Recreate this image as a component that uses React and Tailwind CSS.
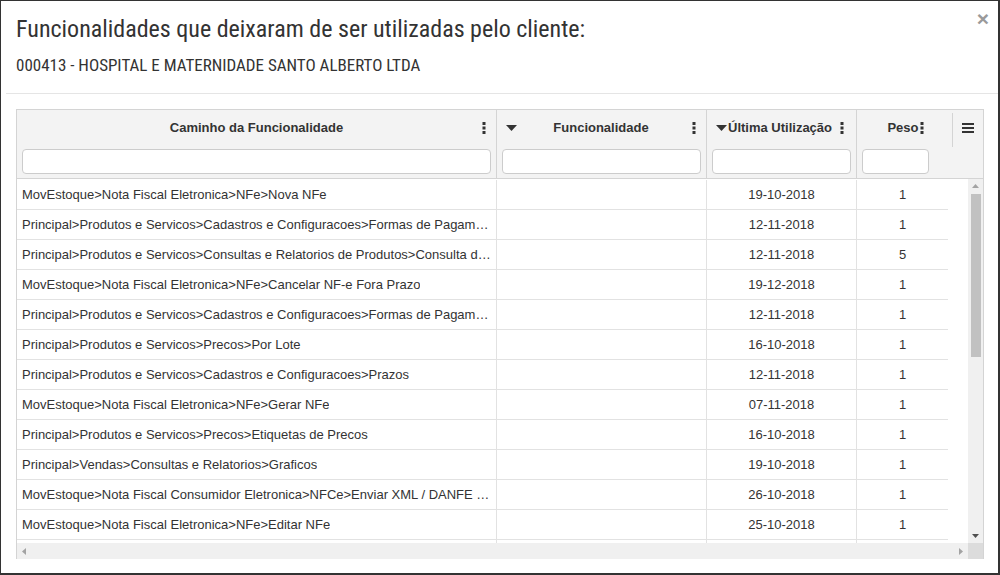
import React from 'react';

const rows = [
  ['MovEstoque>Nota Fiscal Eletronica>NFe>Nova NFe', '19-10-2018', '1'],
  ['Principal>Produtos e Servicos>Cadastros e Configuracoes>Formas de Pagamento', '12-11-2018', '1'],
  ['Principal>Produtos e Servicos>Consultas e Relatorios de Produtos>Consulta de Produtos', '12-11-2018', '5'],
  ['MovEstoque>Nota Fiscal Eletronica>NFe>Cancelar NF-e Fora Prazo', '19-12-2018', '1'],
  ['Principal>Produtos e Servicos>Cadastros e Configuracoes>Formas de Pagamento', '12-11-2018', '1'],
  ['Principal>Produtos e Servicos>Precos>Por Lote', '16-10-2018', '1'],
  ['Principal>Produtos e Servicos>Cadastros e Configuracoes>Prazos', '12-11-2018', '1'],
  ['MovEstoque>Nota Fiscal Eletronica>NFe>Gerar NFe', '07-11-2018', '1'],
  ['Principal>Produtos e Servicos>Precos>Etiquetas de Precos', '16-10-2018', '1'],
  ['Principal>Vendas>Consultas e Relatorios>Graficos', '19-10-2018', '1'],
  ['MovEstoque>Nota Fiscal Consumidor Eletronica>NFCe>Enviar XML / DANFE por Email', '26-10-2018', '1'],
  ['MovEstoque>Nota Fiscal Eletronica>NFe>Editar NFe', '25-10-2018', '1'],
  ['', '', ''],
];

const Dots = () => (
  <svg width="4" height="12" viewBox="0 0 4 12" className="shrink-0">
    <rect x="0.5" y="0" width="3" height="3" fill="#333" />
    <rect x="0.5" y="4.5" width="3" height="3" fill="#333" />
    <rect x="0.5" y="9" width="3" height="3" fill="#333" />
  </svg>
);

const Caret = () => (
  <svg width="11" height="6" viewBox="0 0 11 6" className="shrink-0">
    <path d="M0 0h11L5.5 6z" fill="#333" />
  </svg>
);

const FilterInput = ({ w }) => (
  <input type="text" className={`h-[25px] rounded border border-[#ccc] bg-white ${w}`} />
);

const App = () => {
  return (
    <div className="w-[1000px] h-[575px] bg-white border-l border-t border-r-2 border-b-2 border-[#333] overflow-hidden relative font-['Liberation_Sans',Arial,sans-serif] text-[#333]">
      <button className="absolute right-[9px] top-[7px] text-[21px] leading-none font-bold text-[#9a9a9a] font-['Liberation_Sans',sans-serif]">
        ×
      </button>

      <div className="px-[15px] pt-[13px] h-[92px] font-['Roboto',sans-serif]">
        <h1 className="text-[24px] leading-[30px] text-[#333] font-stretch-[82%]">
          Funcionalidades que deixaram de ser utilizadas pelo cliente:
        </h1>
        <p className="mt-[11px] text-[17px] leading-[20px] text-[#333] font-stretch-[82%]">
          000413 - HOSPITAL E MATERNIDADE SANTO ALBERTO LTDA
        </p>
      </div>
      <div className="ml-[5px] border-t border-[#e5e5e5]" />

      <div className="ml-[15px] mt-[15px] w-[968px] border-l border-r border-t border-[#d4d4d4]">
        {/* header */}
        <div className="flex bg-[#f3f3f3] border-b border-[#d4d4d4] h-[69px] text-[13px] font-bold">
          <div className="w-[480px] border-r border-[#d4d4d4] flex flex-col">
            <div className="h-[35px] flex items-center pl-[10px] pr-[10px]">
              <span className="w-[4px]" />
              <span className="flex-1 text-center">Caminho da Funcionalidade</span>
              <Dots />
            </div>
            <div className="pl-[5px] mt-[4px]">
              <FilterInput w="w-[469px]" />
            </div>
          </div>
          <div className="w-[210px] border-r border-[#d4d4d4] flex flex-col">
            <div className="h-[35px] flex items-center pl-[9px] pr-[10px]">
              <Caret />
              <span className="flex-1 text-center pr-[7px]">Funcionalidade</span>
              <Dots />
            </div>
            <div className="pl-[5px] mt-[4px]">
              <FilterInput w="w-[199px]" />
            </div>
          </div>
          <div className="w-[150px] border-r border-[#d4d4d4] flex flex-col">
            <div className="h-[35px] flex items-center pl-[9px] whitespace-nowrap">
              <Caret />
              <span className="ml-[1px]">Última Utilização</span>
              <span className="ml-[8px]"><Dots /></span>
            </div>
            <div className="pl-[5px] mt-[4px]">
              <FilterInput w="w-[139px]" />
            </div>
          </div>
          <div className="w-[95px] flex flex-col">
            <div className="h-[35px] flex items-center justify-center pl-[2px]">
              <span>Peso</span>
              <span className="ml-[1px]"><Dots /></span>
            </div>
            <div className="pl-[5px] mt-[4px]">
              <FilterInput w="w-[67px]" />
            </div>
          </div>
          <div className="flex-1 flex items-start">
            <div className="mt-[3px] h-[34px] border-l border-[#d4d4d4]" />
            <div className="flex-1 h-[35px] flex items-center justify-center">
              <svg width="12" height="10" viewBox="0 0 12 10">
                <rect x="0" y="0" width="12" height="2" fill="#333" />
                <rect x="0" y="4" width="12" height="2" fill="#333" />
                <rect x="0" y="8" width="12" height="2" fill="#333" />
              </svg>
            </div>
          </div>
        </div>

        {/* body */}
        <div className="flex h-[364px]">
          <div className="w-[952px] overflow-hidden pt-[1px]">
            <div className="w-[931px]">
              {rows.map((r, i) => (
                <div key={i} className="flex h-[30px] border-b border-[#e2e2e2] text-[13px]">
                  <div className="w-[480px] border-r border-[#e2e2e2] px-[5px] flex items-center min-w-0">
                    <span className="truncate">{r[0]}</span>
                  </div>
                  <div className="w-[210px] border-r border-[#e2e2e2]" />
                  <div className="w-[150px] border-r border-[#e2e2e2] flex items-center justify-center">
                    {r[1]}
                  </div>
                  <div className="flex-1 flex items-center justify-center">{r[2]}</div>
                </div>
              ))}
            </div>
          </div>
          <div className="w-[15px] bg-[#f0f0f0] flex flex-col items-center">
            <svg width="7" height="4" viewBox="0 0 7 4" className="mt-[5px]">
              <path d="M0 4L3.5 0L7 4z" fill="#a3a3a3" />
            </svg>
            <div className="mt-[6px] w-[10px] h-[163px] bg-[#c1c1c1]" />
            <div className="flex-1" />
            <svg width="7" height="4" viewBox="0 0 7 4" className="mb-[5px]">
              <path d="M0 0h7L3.5 4z" fill="#505050" />
            </svg>
          </div>
        </div>
        <div className="flex h-[16px]">
          <div className="w-[952px] bg-[#f0f0f0] flex items-center justify-between px-[5px]">
            <svg width="4" height="7" viewBox="0 0 4 7">
              <path d="M4 0v7L0 3.5z" fill="#a3a3a3" />
            </svg>
            <svg width="4" height="7" viewBox="0 0 4 7">
              <path d="M0 0v7L4 3.5z" fill="#a3a3a3" />
            </svg>
          </div>
          <div className="w-[15px] bg-[#dcdcdc]" />
        </div>
      </div>
    </div>
  );
};

export default App;
